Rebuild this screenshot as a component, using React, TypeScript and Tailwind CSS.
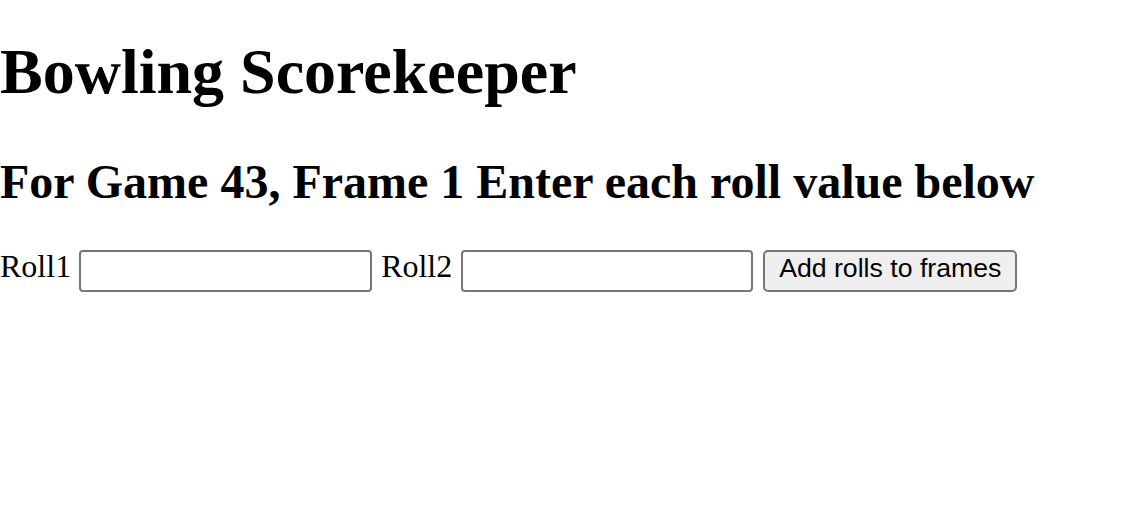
import React, { useState } from "react";

export default function App() {
  const [roll1, setRoll1] = useState<string>("");
  const [roll2, setRoll2] = useState<string>("");

  return (
    <div className="w-[1136px] h-[512px] bg-white text-black font-['Liberation_Serif',serif]">
      <h1 className="pt-[40px] text-[64px] leading-[64px] font-bold">Bowling Scorekeeper</h1>
      <h2 className="mt-[54px] text-[48px] leading-[48px] font-bold">
        For Game 43, Frame 1 Enter each roll value below
      </h2>

      {/* форма ввода бросков */}
      <form className="mt-[44px] flex items-start" onSubmit={(e) => e.preventDefault()}>
        <label className="text-[32px] leading-[32px]">Roll1</label>
        <input
          value={roll1}
          onChange={(e) => setRoll1(e.target.value)}
          className="ml-[8px] w-[293px] h-[42px] border-2 border-[#767676] rounded-[4px] bg-white"
        />
        <label className="ml-[9px] text-[32px] leading-[32px]">Roll2</label>
        <input
          value={roll2}
          onChange={(e) => setRoll2(e.target.value)}
          className="ml-[9px] w-[292px] h-[42px] border-2 border-[#767676] rounded-[4px] bg-white"
        />
        <button
          type="submit"
          className="ml-[10px] w-[254px] h-[42px] flex items-center justify-center pb-[6px] border-2 border-[#767676] rounded-[5px] bg-[#efefef] text-[26.67px] font-['Liberation_Sans',Arial,sans-serif]"
        >
          Add rolls to frames
        </button>
      </form>
    </div>
  );
}
